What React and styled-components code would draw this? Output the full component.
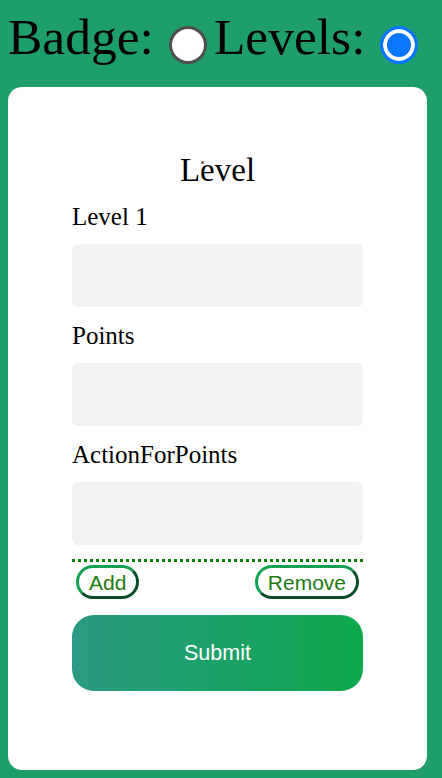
import React from "react";
import styled, { createGlobalStyle } from "styled-components";

const GlobalStyle = createGlobalStyle`
  html, body {
    margin: 0;
    background: #1e9f6a;
  }
  body {
    padding: 8px;
    box-sizing: border-box;
    min-height: 778px;
    font-family: "Liberation Serif", "Times New Roman", serif;
  }
`;

const TypePicker = styled.div`
  display: flex;
  align-items: flex-start;
  height: 79px;
  padding-top: 2px;
  box-sizing: border-box;
  font-size: 51.5px;
  line-height: 1;
`;

const PickerLabel = styled.label`
  display: flex;
  align-items: center;
  color: #000;
`;

const Radio = styled.input`
  appearance: none;
  flex: none;
  width: 38px;
  height: 38px;
  margin: 16px 7px 0 15px;
  border-radius: 50%;
  box-sizing: border-box;
  border: 3px solid #4f4f4f;
  background: #fff;

  &:checked {
    border-color: #0a75ff;
    background: #0a75ff;
    box-shadow: inset 0 0 0 4px #fff;
  }
`;

const Card = styled.div`
  width: 419px;
  height: 683px;
  background: #fff;
  border-radius: 14px;
  box-sizing: border-box;
  padding: 64px 64px 0;
`;

const Form = styled.form`
  display: flex;
  flex-direction: column;
`;

const Title = styled.h2`
  position: relative;
  margin: 0;
  font-size: 33px;
  font-weight: 400;
  line-height: 38px;
  text-align: center;

  &::after {
    content: "";
    position: absolute;
    left: 129px;
    top: 10px;
    width: 3px;
    height: 3px;
    border-radius: 50%;
    background: #8a5a3a;
  }
`;

const FieldLabel = styled.label`
  display: block;
  margin: ${({ $first }) => ($first ? "13px" : "14px")} 0 13px;
  font-size: 25px;
  line-height: 29px;
`;

const Field = styled.input`
  height: 63px;
  border: none;
  border-radius: 6px;
  background: #f2f2f2;
  padding: 0 12px;
  font-size: 18px;
  outline: none;
`;

const Divider = styled.div`
  margin-top: 14px;
  border-top: 3px dotted #008000;
`;

const ActionRow = styled.div`
  display: flex;
  justify-content: space-between;
  padding: 3px 4px 0;
`;

const PillButton = styled.button`
  height: 34px;
  padding: 0 10px;
  border: 3px outset #12a150;
  border-radius: 17px;
  background: #fff;
  color: #1f7a12;
  font-family: "Liberation Sans", Arial, sans-serif;
  font-size: 21px;
  line-height: 1;
  cursor: pointer;
`;

const SubmitButton = styled.button`
  margin-top: 16px;
  height: 76px;
  border: none;
  border-radius: 22px;
  background: linear-gradient(90deg, #2a9a82, #0ea84c);
  color: #fff;
  font-family: "Liberation Sans", Arial, sans-serif;
  font-size: 21.5px;
  cursor: pointer;
`;

const fields = ["Level 1", "Points", "ActionForPoints"];

export default function App() {
  return (
    <>
      <GlobalStyle />
      <TypePicker>
        <PickerLabel>
          Badge:
          <Radio type="radio" name="kind" value="badge" />
        </PickerLabel>
        <PickerLabel>
          Levels:
          <Radio type="radio" name="kind" value="levels" defaultChecked />
        </PickerLabel>
      </TypePicker>
      <Card>
        <Form onSubmit={(e) => e.preventDefault()}>
          <Title>Level</Title>
          {fields.map((name, i) => (
            <React.Fragment key={name}>
              <FieldLabel $first={i === 0}>{name}</FieldLabel>
              <Field type="text" />
            </React.Fragment>
          ))}
          <Divider />
          <ActionRow>
            <PillButton type="button">Add</PillButton>
            <PillButton type="button">Remove</PillButton>
          </ActionRow>
          <SubmitButton type="submit">Submit</SubmitButton>
        </Form>
      </Card>
    </>
  );
}
